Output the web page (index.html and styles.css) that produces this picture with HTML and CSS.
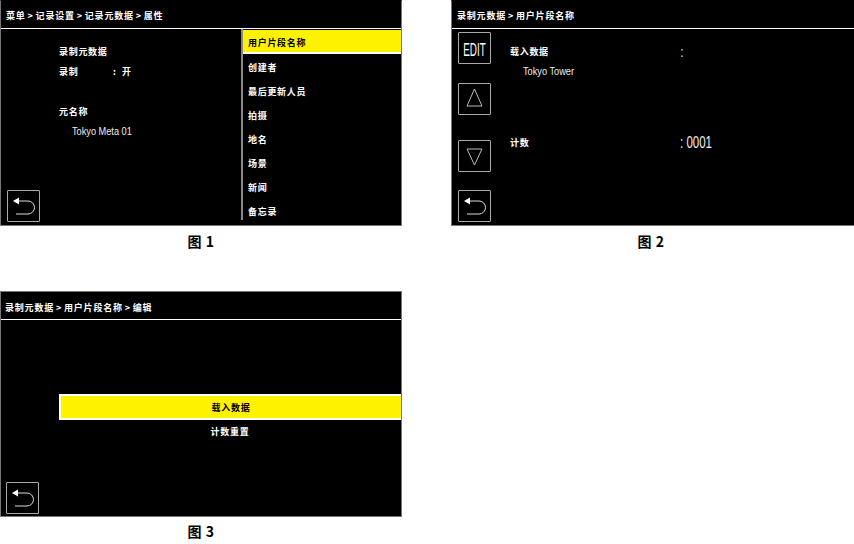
FILE: index.html
```html
<!DOCTYPE html>
<html lang="zh-CN">
<head>
<meta charset="utf-8">
<title>记录元数据</title>
<link rel="stylesheet" href="styles.css">
</head>
<body>
<main class="page">
  <figure class="fig fig-1">
    <section class="screen">
      <header class="crumb">菜单 &gt; 记录设置 &gt; 记录元数据 &gt; 属性</header>
      <div class="s1-body">
        <div class="s1-left">
          <div class="s1-info">
            <div class="label r1">录制元数据</div>
            <div class="label r2 kv"><span class="key">录制</span><span>:&nbsp;&nbsp;开</span></div>
            <div class="label r3">元名称</div>
            <div class="value r4">Tokyo Meta 01</div>
          </div>
          <button class="btn back" aria-label="返回"><svg viewBox="0 0 31 30"><path d="M11 10H20A6.500 6.500 0 0 1 20 23H8" /><polygon points="5,10 11,6.500 11,13.500" /></svg></button>
        </div>
        <ul class="menu">
          <li class="sel">用户片段名称</li>
          <li>创建者</li>
          <li>最后更新人员</li>
          <li>拍摄</li>
          <li>地名</li>
          <li>场景</li>
          <li>新闻</li>
          <li>备忘录</li>
        </ul>
      </div>
    </section>
    <figcaption>图 1</figcaption>
  </figure>

  <figure class="fig fig-2">
    <section class="screen">
      <header class="crumb">录制元数据 &gt; 用户片段名称</header>
      <div class="s2-body">
        <div class="s2-btns">
          <button class="btn edit"><span class="edit-text">EDIT</span></button>
          <button class="btn" aria-label="上"><svg viewBox="0 0 31 30"><polygon class="line" points="15.500,5 8,22 23,22" /></svg></button>
          <button class="btn" aria-label="下"><svg viewBox="0 0 31 30"><polygon class="line" points="8,8 23,8 15.500,24" /></svg></button>
          <button class="btn back" aria-label="返回"><svg viewBox="0 0 31 30"><path d="M11 10H20A6.500 6.500 0 0 1 20 23H8" /><polygon points="5,10 11,6.500 11,13.500" /></svg></button>
        </div>
        <div class="s2-info">
          <div class="s2-row load"><span class="label s2-key">载入数据</span><span class="colon">:</span></div>
          <div class="value tower">Tokyo Tower</div>
          <div class="s2-row count"><span class="label s2-key">计数</span><span class="big">: 0001</span></div>
        </div>
      </div>
    </section>
    <figcaption>图 2</figcaption>
  </figure>

  <figure class="fig fig-3">
    <section class="screen">
      <header class="crumb">录制元数据 &gt; 用户片段名称 &gt; 编辑</header>
      <div class="s3-body">
        <ul class="options">
          <li class="sel">载入数据</li>
          <li>计数重置</li>
        </ul>
        <button class="btn back" aria-label="返回"><svg viewBox="0 0 31 30"><path d="M11 10H20A6.500 6.500 0 0 1 20 23H8" /><polygon points="5,10 11,6.500 11,13.500" /></svg></button>
      </div>
    </section>
    <figcaption>图 3</figcaption>
  </figure>
</main>
</body>
</html>
```
FILE: styles.css
```css
* { box-sizing: border-box; }
html, body { margin: 0; background: #fff; }
body { font-family: "Noto Sans CJK SC", "Liberation Sans", sans-serif; color: #fff; }
.page {
  width: 854px;
  height: 544px;
  display: grid;
  grid-template-columns: 402px 403px;
  column-gap: 49px;
  align-content: start;
  overflow: hidden;
}
.fig { margin: 0; display: flex; flex-direction: column; }
.fig-3 { margin-top: 24px; }
.fig figcaption {
  color: #000;
  text-align: center;
  font-size: 14px;
  line-height: 18px;
  font-weight: 700;
  letter-spacing: 0.5px;
  margin-top: 6px;
  height: 35px;
}
.fig-3 figcaption { margin-top: 5px; height: 18px; }
.fig-2 figcaption { padding-right: 3px; }
.screen {
  height: 226px;
  background: #000;
  border: 1px solid #777;
  border-top-color: #000;
  display: flex;
  flex-direction: column;
}
.fig-2 .screen { border-right: 0; }
.fig-3 .screen { border-top-color: #777; }
.crumb {
  height: 28px;
  flex: none;
  border-bottom: 1px solid #fff;
  padding: 6px 0 0 5px;
  font-size: 9px;
  line-height: 18px;
  letter-spacing: 0.8px;
  word-spacing: -0.9px;
  font-weight: 700;
  white-space: nowrap;
}
.fig-3 .crumb { padding: 7px 0 0 4px; }
.label { font-size: 9px; line-height: 14px; font-weight: 700; letter-spacing: 0.7px; white-space: nowrap; }
.value {
  font-family: "Liberation Sans", sans-serif;
  font-size: 10px;
  line-height: 14px;
  color: #eee;
  white-space: nowrap;
  transform: scaleX(0.92);
  transform-origin: 13px 0;
}

.btn {
  display: block;
  width: 33px;
  height: 32px;
  padding: 0;
  background: #000;
  border: 1px solid #aaa;
  border-radius: 1px;
  color: #fff;
}
.btn svg { display: block; width: 31px; height: 30px; }
.btn svg path { fill: none; stroke: #ddd; stroke-width: 1; }
.btn svg polygon { fill: #fff; }
.btn svg polygon.line { fill: none; stroke: #bbb; stroke-width: 1; }
.edit { font-family: "Liberation Sans", sans-serif; font-size: 19px; line-height: 1; overflow: hidden; padding-top: 2px; }
.edit-text { display: block; transform: scaleX(0.52); transform-origin: center; margin: 0 -10px; text-align: center; }

.s1-body { flex: 1; display: flex; min-height: 0; }
.s1-left { width: 240px; flex: none; display: flex; flex-direction: column; justify-content: space-between; padding: 0 0 3px 6px; }
.s1-info { padding: 16px 0 0 52px; }
.r2 { margin-top: 6px; }
.r3 { margin-top: 26px; }
.r4 { margin-top: 6px; padding-left: 13px; }
.kv { display: flex; }
.key { width: 54px; }
.menu {
  list-style: none;
  margin: 0;
  padding: 0;
  flex: 1;
  align-self: flex-start;
  border-left: 2px solid #888;
  font-size: 9px;
  font-weight: 700;
  letter-spacing: 0.7px;
}
.menu li { height: 24px; line-height: 24px; padding-left: 5px; white-space: nowrap; }
.menu li:last-child { height: 20px; }
.menu li.sel { height: 25px; margin-bottom: 2px; background: #fff200; color: #000; border-bottom: 2px solid #fff; border-top: 1px solid #000; line-height: 25px; }

.s2-body { flex: 1; display: flex; min-height: 0; }
.s2-btns { width: 58px; flex: none; padding: 3px 0 0 6px; display: flex; flex-direction: column; }
.s2-btns .btn:nth-child(2) { margin-top: 19px; }
.s2-btns .btn:nth-child(3) { margin-top: 25px; }
.s2-btns .btn:nth-child(4) { margin-top: 18px; }
.s2-info { flex: 1; padding-top: 16px; }
.s2-row { display: flex; align-items: center; }
.s2-key { width: 170px; }
.colon { font-family: "Liberation Sans", sans-serif; font-size: 14px; line-height: 14px; color: #ccc; }
.tower { margin-top: 6px; padding-left: 13px; }
.count { margin-top: 57px; }
.big {
  display: block;
  font-family: "Liberation Sans", sans-serif;
  font-size: 16px;
  line-height: 14px;
  color: #eee;
  white-space: nowrap;
  transform: scaleX(0.72);
  transform-origin: 0 0;
}

.s3-body { flex: 1; display: flex; flex-direction: column; justify-content: space-between; padding: 74px 0 2px 0; min-height: 0; }
.options { list-style: none; margin: 0 0 0 58px; padding: 0; font-size: 9px; font-weight: 700; letter-spacing: 0.7px; text-align: center; }
.options li { height: 26px; line-height: 24px; }
.options li.sel { background: #fff200; color: #000; border: solid #fff; border-width: 2px 0 2px 2px; line-height: 24px; }
.s3-body .back { margin-left: 5px; }
```
